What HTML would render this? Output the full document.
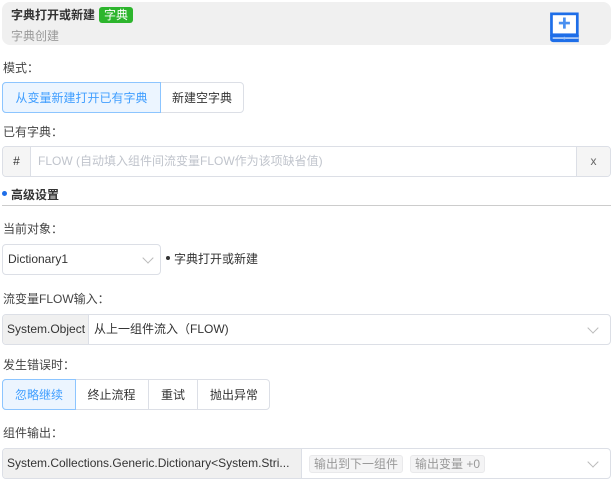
<!DOCTYPE html><html><head><style>
*{box-sizing:border-box;margin:0;padding:0}
body{width:613px;height:483px;background:#fff;font-family:"Liberation Sans","Noto Sans CJK SC",sans-serif;font-size:12px;color:#333;position:relative;overflow:hidden}
.a{position:absolute}
.lbl{position:absolute;left:3px;font-size:12px;color:#444}
.box{position:absolute;border:1px solid #dcdfe6;border-radius:4px;background:#fff}
.chev{position:absolute;width:8px;height:8px;border-right:1px solid #bbb;border-bottom:1px solid #bbb;transform:rotate(45deg)}
.seg{position:absolute;top:0;bottom:0;display:flex;align-items:center;justify-content:center;border-left:1px solid #dcdfe6;font-size:12px;color:#333}
.act{background:#ecf5ff;color:#409eff;border:1px solid #8cc5ff;border-radius:4px 0 0 4px}
.tag{position:absolute;top:6px;height:18px;background:#f4f4f5;border:1px solid #e9e9eb;border-radius:3px;color:#999;font-size:12px;line-height:16px;padding:0 4px}
</style></head><body>
<div class="a" style="left:2px;top:2px;width:609px;height:43px;background:#f0f0f0;border-radius:8px"></div>
<div class="a" style="left:11px;top:7px;font-weight:bold;font-size:12px;color:#333;line-height:16px">字典打开或新建</div>
<div class="a" style="left:99px;top:7px;width:34px;height:16px;background:#2db52d;border-radius:3px;color:#fff;font-size:12px;line-height:16px;text-align:center">字典</div>
<div class="a" style="left:11px;top:27px;font-size:12px;color:#999">字典创建</div>
<svg class="a" style="left:549px;top:12px" width="32" height="32" viewBox="0 0 26 26">
<rect x="2" y="1.5" width="21" height="17" fill="#fff" stroke="#1e6ee8" stroke-width="2.2"/>
<path d="M12.5 4.5v9M8 9h9" stroke="#4a90f0" stroke-width="2.2"/>
<path d="M0.9 1.5v20.5a2.5 2.5 0 0 0 2.5 2.5h20.8v-6H0.9z" fill="#1e6ee8"/>
<path d="M3 21.2h21" stroke="#fff" stroke-width="0.9"/>
<circle cx="12.5" cy="21.2" r="1.1" fill="#9cc2fb"/>
</svg>
<div class="lbl" style="top:59px">模式：</div>
<div class="box" style="left:2px;top:82px;width:242px;height:31px">
<div class="seg act" style="left:-1px;width:159px;top:-1px;bottom:-1px">从变量新建打开已有字典</div>
<div class="seg" style="left:157px;width:84px;border-left:none">新建空字典</div></div>
<div class="lbl" style="top:123px">已有字典：</div>
<div class="box" style="left:2px;top:146px;width:609px;height:31px;overflow:hidden">
<div class="a" style="left:0;top:0;width:28px;height:29px;background:#f5f5f5;border-right:1px solid #dcdfe6;text-align:center;line-height:29px">#</div>
<div class="a" style="left:35px;top:0;line-height:29px;color:#c0c4cc">FLOW (自动填入组件间流变量FLOW作为该项缺省值)</div>
<div class="a" style="right:0;top:0;width:34px;height:29px;background:#f5f5f5;border-left:1px solid #dcdfe6;text-align:center;line-height:29px;color:#666">x</div></div>
<div class="a" style="left:2px;top:191px;width:5px;height:5px;border-radius:50%;background:#1e6ee8"></div>
<div class="a" style="left:11px;top:186px;font-weight:bold;color:#333">高级设置</div>
<div class="a" style="left:2px;top:205px;width:609px;height:1px;background:#ccc"></div>
<div class="lbl" style="top:220px">当前对象：</div>
<div class="box" style="left:2px;top:244px;width:159px;height:31px"><div class="a" style="left:5px;top:0;line-height:29px">Dictionary1</div><div class="chev" style="left:141px;top:9px"></div></div>
<div class="a" style="left:166px;top:256px;width:4px;height:4px;border-radius:50%;background:#333"></div>
<div class="a" style="left:174px;top:250px;color:#333">字典打开或新建</div>
<div class="lbl" style="top:290px">流变量FLOW输入：</div>
<div class="box" style="left:2px;top:314px;width:609px;height:31px;overflow:hidden">
<div class="a" style="left:0;top:0;width:86px;height:29px;background:#f0f0f0;border-right:1px solid #dcdfe6;line-height:29px;padding-left:4px">System.Object</div>
<div class="a" style="left:91px;top:0;line-height:29px">从上一组件流入（FLOW)</div><div class="chev" style="left:586px;top:9px"></div></div>
<div class="lbl" style="top:356px">发生错误时：</div>
<div class="box" style="left:2px;top:379px;width:268px;height:31px">
<div class="seg act" style="left:-1px;width:74px;top:-1px;bottom:-1px">忽略继续</div>
<div class="seg" style="left:72px;width:73px;border-left:none">终止流程</div>
<div class="seg" style="left:145px;width:49px">重试</div>
<div class="seg" style="left:194px;width:73px">抛出异常</div></div>
<div class="lbl" style="top:424px">组件输出：</div>
<div class="box" style="left:2px;top:448px;width:609px;height:31px;overflow:hidden">
<div class="a" style="left:0;top:0;width:299px;height:29px;background:#f0f0f0;border-right:1px solid #dcdfe6;line-height:29px;padding-left:4px;white-space:nowrap">System.Collections.Generic.Dictionary&lt;System.Stri...</div>
<div class="tag" style="left:306px">输出到下一组件</div>
<div class="tag" style="left:407px">输出变量 +0</div>
<div class="chev" style="left:586px;top:9px"></div></div>
</body></html>
